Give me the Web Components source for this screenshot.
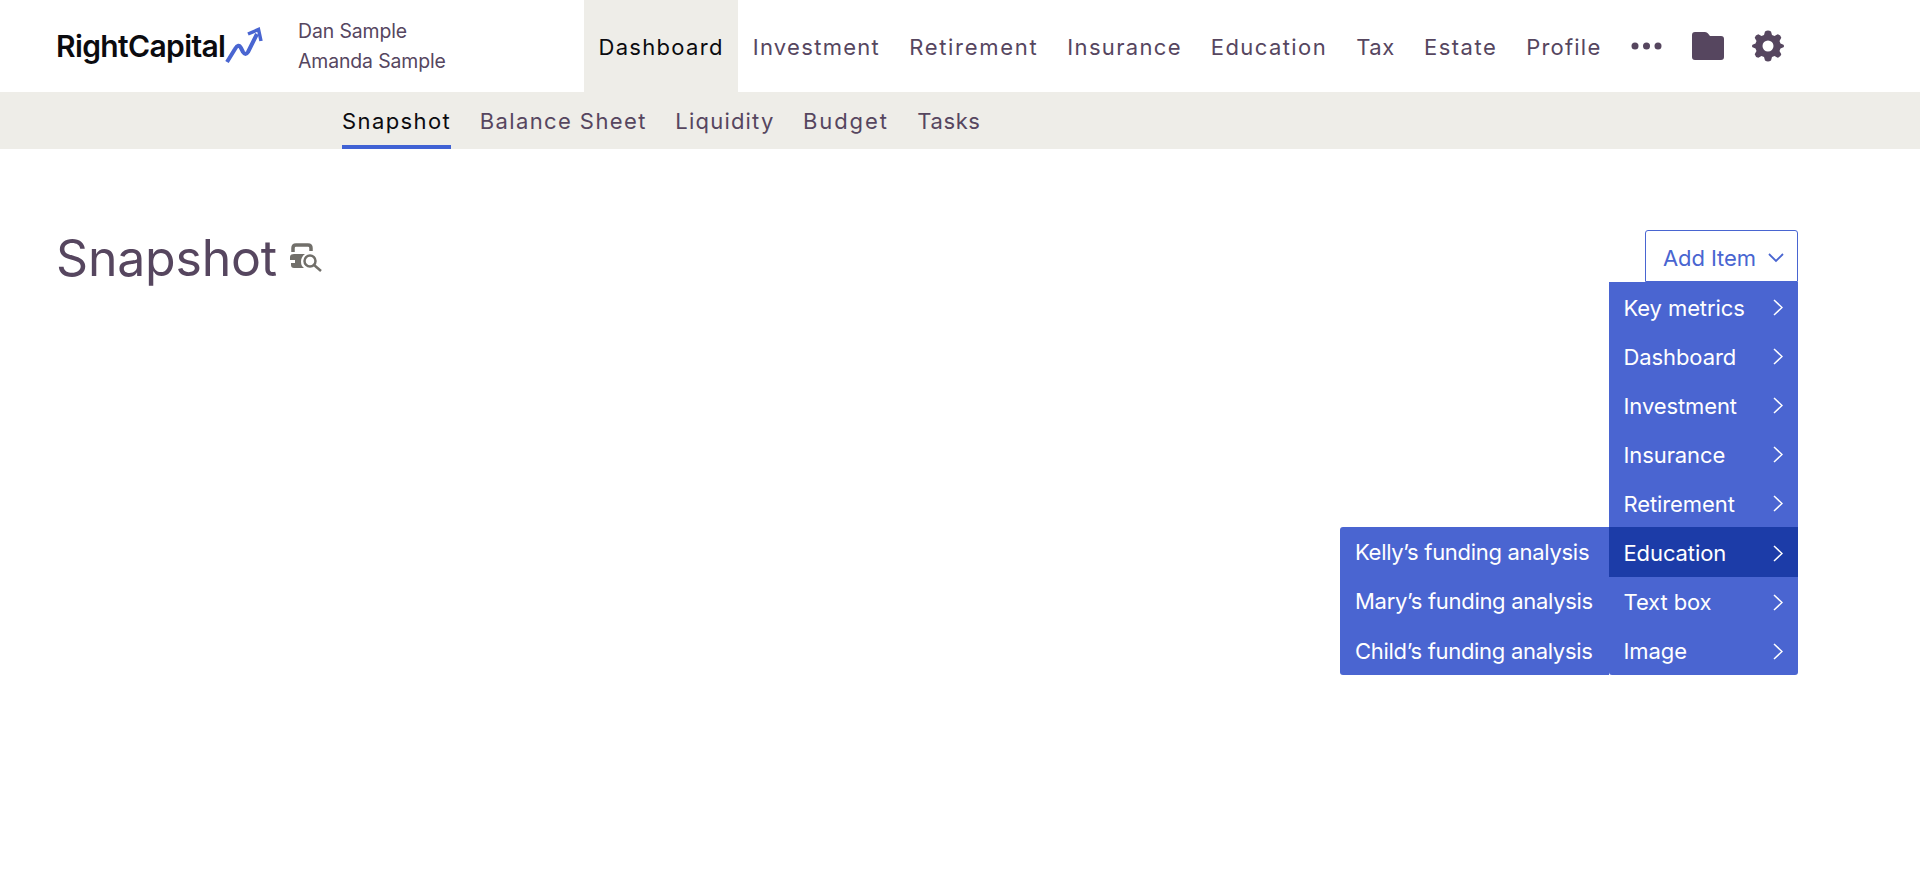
<!doctype html>
<html><head><meta charset="utf-8"><title>Snapshot</title>
<style>
html,body{margin:0;background:#fff;font-family:Inter,"Liberation Sans",sans-serif;color:#56465f}
body{height:876px;overflow:hidden}
</style></head><body>
<rc-header>
  <rc-logo slot="logo"></rc-logo>
  <rc-names slot="names"><div>Dan Sample</div><div>Amanda Sample</div></rc-names>
  <rc-tab slot="nav" active style="--ls:1.3px">Dashboard</rc-tab>
  <rc-tab slot="nav" style="--ls:1.3px">Investment</rc-tab>
  <rc-tab slot="nav" style="--ls:1.7px">Retirement</rc-tab>
  <rc-tab slot="nav" style="--ls:1.32px">Insurance</rc-tab>
  <rc-tab slot="nav" style="--ls:1.42px">Education</rc-tab>
  <rc-tab slot="nav" style="--ls:.6px">Tax</rc-tab>
  <rc-tab slot="nav" style="--ls:1.5px">Estate</rc-tab>
  <rc-tab slot="nav" style="--ls:1.2px">Profile</rc-tab>
  <rc-tools slot="nav"></rc-tools>
</rc-header>
<rc-subnav>
  <rc-subtab active>Snapshot</rc-subtab>
  <rc-subtab>Balance Sheet</rc-subtab>
  <rc-subtab style="--ls:1.2px">Liquidity</rc-subtab>
  <rc-subtab style="--ls:1.9px">Budget</rc-subtab>
  <rc-subtab style="--ls:.6px">Tasks</rc-subtab>
</rc-subnav>
<rc-page title-text="Snapshot"><rc-add-item slot="action"></rc-add-item></rc-page>
<script>
function def(name, html, init){
  customElements.define(name, class extends HTMLElement{
    constructor(){super();this.attachShadow({mode:'open'}).innerHTML=html;}
    connectedCallback(){ if(init) init(this); }
  });
}
def('rc-header',`<style>
:host{display:flex;height:92px;background:#fff;align-items:stretch}
.logo{display:flex;align-items:center;padding-left:56px;width:242px;box-sizing:content-box}
.names{display:flex;align-items:center;width:286px;padding-top:1px;box-sizing:border-box}
nav{display:flex;align-items:stretch}
</style><div class="logo"><slot name="logo"></slot></div><div class="names"><slot name="names"></slot></div><nav><slot name="nav"></slot></nav>`);
def('rc-logo',`<style>
:host{display:flex;align-items:center;height:40px}
b{font:600 30px/40px Inter,"Liberation Sans",sans-serif;color:#0b0b0f;letter-spacing:-.63px}
svg{display:block;width:38px;height:38px}
</style><b>RightCapital</b><svg viewBox="0 0 38 38" fill="none" stroke="#4965d1" stroke-width="4"><path d="M2 35 L10 22 Q13.500 16 16 21 L18 25 Q20.500 29 23 25 L32 7" stroke-linejoin="round"/><path d="M23 7 L33.500 2.500 L36 14" stroke-width="3.500"/></svg>`);
def('rc-names',`<style>:host{display:block;font:400 19.400px/29.500px Inter,"Liberation Sans",sans-serif;color:#56465f;letter-spacing:-.1px}</style><slot></slot>`);
def('rc-tab',`<style>
:host{display:flex;align-items:center;padding:2px 14.500px 0;font:400 22px/30px Inter,"Liberation Sans",sans-serif;letter-spacing:var(--ls,1.4px);color:#56465f}
:host([active]){background:#eeede8;color:#0b0b0f}
</style><slot></slot>`);
def('rc-tools',`<style>
:host{display:flex;align-items:center;padding-left:15px;gap:30px}
svg{display:block}
</style>
<svg width="31" height="10" viewBox="0 0 31 10" fill="#56465f"><circle cx="4" cy="5" r="3.500"/><circle cx="15.500" cy="5" r="3.500"/><circle cx="27" cy="5" r="3.500"/></svg>
<svg width="32" height="28" viewBox="0 0 32 28" fill="#56465f"><path d="M3 0h10q2 0 3 1.500L18 4h11q3 0 3 3v18q0 3-3 3H3q-3 0-3-3V3q0-3 3-3z"/></svg>
<svg width="32" height="32" viewBox="0 0 32 32" fill="#56465f" style="margin-left:-2px"><path fill-rule="evenodd" d="M13 1.500Q16 -.5 19 1.500L20 5l2.500 1 3.200-1.800q3 .8 3.600 3.600L27.500 11l1 2.500 3 1.200q1 1.300 0 2.600l-3 1.200-1 2.500 1.800 3.200q-.6 2.800-3.600 3.600L22.500 26l-2.500 1-1 3.500q-3 2-6 0L12 27l-2.500-1-3.200 1.800q-3-.8-3.600-3.600L4.500 21l-1-2.500-3-1.200q-1-1.300 0-2.600l3-1.200 1-2.500L2.700 7.800q.6-2.800 3.600-3.600L9.500 6 12 5z M16 10.500a5.500 5.500 0 1 0 0 11a5.500 5.500 0 1 0 0-11z"/></svg>`);
def('rc-subnav',`<style>:host{display:flex;height:57px;background:#eeede8;padding-left:342px;gap:28.500px}</style><slot></slot>`);
def('rc-subtab',`<style>
:host{display:flex;align-items:center;box-sizing:border-box;height:57px;border-bottom:4px solid transparent;border-top:4px solid transparent;font:400 22px/30px Inter,"Liberation Sans",sans-serif;letter-spacing:var(--ls,1.4px);color:#56465f}
:host([active]){color:#0b0b0f;border-bottom-color:#4062d4}
</style><slot></slot>`);
def('rc-page',`<style>
:host{display:flex;justify-content:space-between;align-items:flex-start;padding:83px 122px 0 56px}
.t{display:flex;align-items:center;gap:12px;height:52px}
h1{margin:0;font:400 50px/52px Inter,"Liberation Sans",sans-serif;color:#56465f;letter-spacing:-.2px}
svg{display:block}
</style><div class="t"><h1 id="h"></h1><svg width="33" height="30" viewBox="0 0 33 30" fill="none"><path d="M4 9V5q0-3 3-3h12q3 0 3 3v3" stroke="#716f6a" stroke-width="3.500"/><path d="M5 11h11q-4 3-4 7.500t3 6.500H5q-3 0-3-3v-2h4v-3H1v-3q0-3 4-3z" fill="#716f6a"/><circle cx="21" cy="18" r="5.500" stroke="#716f6a" stroke-width="2.500"/><path d="M25 22l7 6" stroke="#716f6a" stroke-width="2.500"/></svg></div><slot name="action"></slot>`,
 el=>{el.shadowRoot.getElementById('h').textContent=el.getAttribute('title-text')});
def('rc-add-item',`<style>
:host{display:block;position:relative;width:153px;height:52px;margin-top:-2px}
button{all:unset;box-sizing:border-box;display:flex;align-items:center;justify-content:space-between;width:100%;height:100%;padding:4px 13px 0 17px;border:1px solid #4965d1;border-radius:3px 3px 0 0;font:400 22px/30px Inter,"Liberation Sans",sans-serif;color:#4965d1;letter-spacing:-.1px}
rc-menu{position:absolute;right:0;top:52px}
rc-submenu{position:absolute;right:189px;top:297px}
</style><button>Add Item<svg width="16" height="10" viewBox="0 0 16 10" fill="none" stroke="#4965d1" stroke-width="1.800"><path d="M1 1l7 7 7-7"/></svg></button>
<rc-menu>
<rc-menu-item>Key metrics</rc-menu-item><rc-menu-item>Dashboard</rc-menu-item><rc-menu-item>Investment</rc-menu-item><rc-menu-item>Insurance</rc-menu-item><rc-menu-item>Retirement</rc-menu-item><rc-menu-item active>Education</rc-menu-item><rc-menu-item>Text box</rc-menu-item><rc-menu-item>Image</rc-menu-item>
</rc-menu>
<rc-submenu><rc-sub-item>Kelly’s funding analysis</rc-sub-item><rc-sub-item>Mary’s funding analysis</rc-sub-item><rc-sub-item>Child’s funding analysis</rc-sub-item></rc-submenu>`);
def('rc-menu',`<style>:host{display:block;width:189px;background:#4a65d1;border-radius:0 0 3px 3px;overflow:hidden}</style><slot></slot>`);
def('rc-menu-item',`<style>
:host{display:flex;align-items:center;justify-content:space-between;height:49.100px;padding:2px 15px 0 14.500px;font:400 22px/30px Inter,"Liberation Sans",sans-serif;color:#fff;letter-spacing:-.1px;box-sizing:border-box}
:host([active]){background:#1c3ca8}
svg{display:block}
</style><slot></slot><svg width="10" height="17" viewBox="0 0 10 17" fill="none" stroke="#fff" stroke-width="1.500"><path d="M1 1l8 7.500L1 16"/></svg>`);
def('rc-submenu',`<style>:host{display:block;width:269px;background:#4a65d1;border-radius:3px 0 0 3px}</style><slot></slot>`);
def('rc-sub-item',`<style>:host{display:flex;align-items:center;box-sizing:border-box;height:49.300px;padding:1px 0 0 15px;font:400 22px/30px Inter,"Liberation Sans",sans-serif;color:#fff;letter-spacing:-.3px;white-space:nowrap}</style><slot></slot>`);
</script>
</body></html>
